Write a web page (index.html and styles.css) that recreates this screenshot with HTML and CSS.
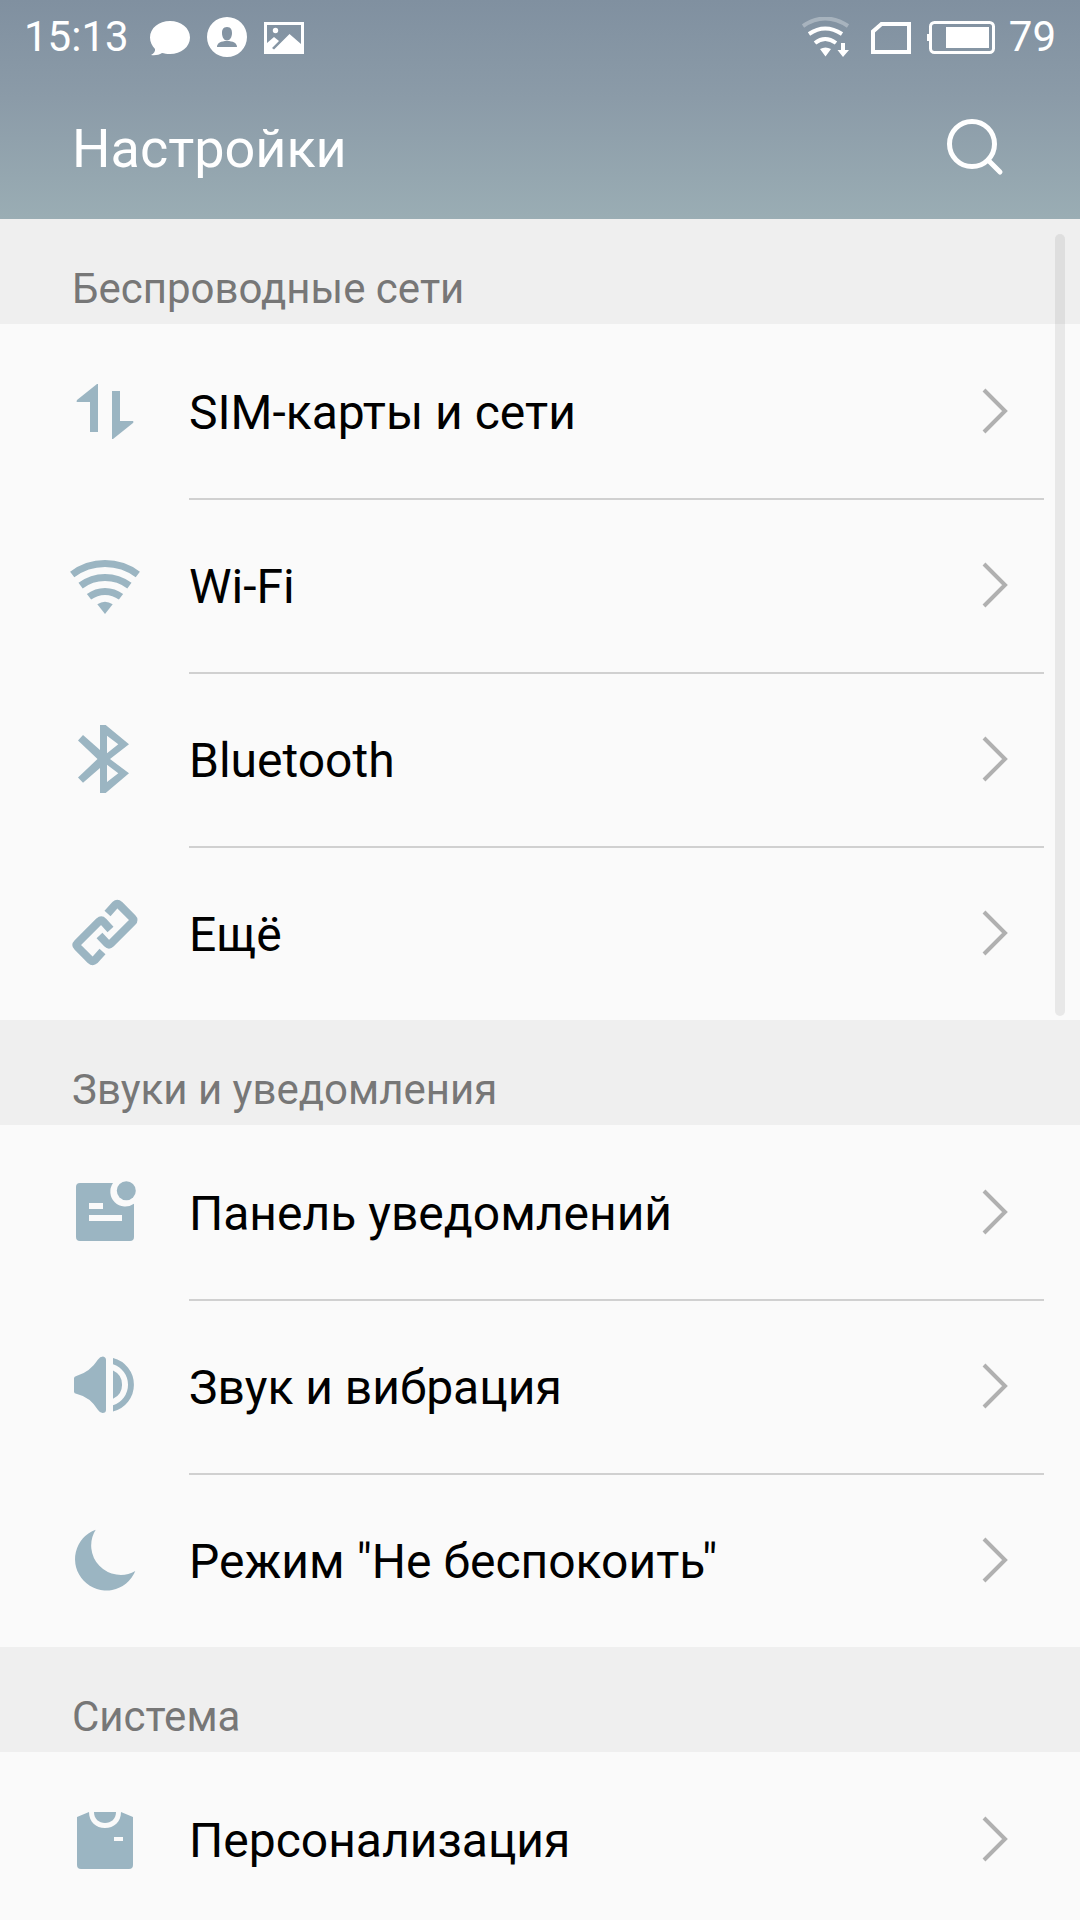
FILE: index.html
```html
<!DOCTYPE html>
<html lang="ru">
	<head>
		<title>Настройки</title>
		<meta charset="UTF-8">
		<meta name="viewport" content="width=device-width">
		<link rel="stylesheet" href="styles.css">
	</head>
	<body>
		<svg width="0" height="0" class="defs">
			<symbol id="arrow" viewBox="0 0 28 48">
				<path d="M3 2 L24 23 L3 44" fill="none" stroke="#b0b0b0" stroke-width="4"/>
			</symbol>
		</svg>

		<header class="top">
			<div class="status">
				<span class="status-text">15:13</span>
				<div class="notices">
					<svg width="40" height="40" viewBox="0 0 40 40">
						<path d="M20 4 C31 4 40 11 40 20.500 C40 30 31 37 20 37 C17 37 14 36.500 12 36 C9 38 5 38.500 1 38 C4 36.500 5.500 34 5 32 C2 29 0 25 0 20.500 C0 11 9 4 20 4z"/>
					</svg>
					<svg width="40" height="40" viewBox="0 0 40 40">
						<path fill-rule="evenodd" d="M20 0 A20 20 0 0 1 20 40 A20 20 0 0 1 20 0z M20 10 C16 10 15 13 15 16 C15 20 17 23.500 20 23.500 C23 23.500 25 20 25 16 C25 13 24 10 20 10z M10 30 H30 C30 26 26 24 20 24 C14 24 10 26 10 30z"/>
					</svg>
					<svg width="40" height="40" viewBox="0 0 40 40">
						<path fill-rule="evenodd" d="M0 5 H40 V37 H0z M3 8 V26 L10 20 L15 24 L8 31 L10 32.500 L25.500 17 L37 27 V8z"/>
						<circle cx="11.500" cy="13.500" r="2.700"/>
					</svg>
				</div>
				<div class="signals">
					<svg width="55" height="40" viewBox="0 0 55 40">
						<path d="M1 9 Q23 -6 46 9" fill="none" stroke="#fff" stroke-width="4" opacity=".3"/>
						<path d="M7 17 Q23 6 40 17 M13 26 Q23 18 34 26" fill="none" stroke="#fff" stroke-width="4"/>
						<path d="M18 32 Q23.500 29 29 32 L23.500 39.500z M39 26 H43 V33 H47 L41 40 L35.500 33 H39z"/>
					</svg>
					<svg width="42" height="40" viewBox="0 0 42 40">
						<path d="M10.500 7 H38 V35 H2 V14.500z" fill="none" stroke="#fff" stroke-width="4"/>
					</svg>
					<svg width="68" height="40" viewBox="0 0 68 40">
						<rect x="3.500" y="5.500" width="63" height="30" rx="4" fill="none" stroke="#fff" stroke-width="3"/>
						<path d="M2 17 H0 V24 H2z M19 10 H62 V31 H19z"/>
					</svg>
					<span class="status-text">79</span>
				</div>
			</div>
			<div class="title-bar">
				<h1>Настройки</h1>
				<button class="search" type="button" aria-label="Поиск">
					<svg width="60" height="60" viewBox="0 0 60 60">
						<circle cx="27" cy="27" r="22.500" fill="none" stroke="#fff" stroke-width="5"/>
						<path d="M43 43 L55 55" stroke="#fff" stroke-width="5" stroke-linecap="round"/>
					</svg>
				</button>
			</div>
		</header>

		<main class="list">
			<section>
				<h2>Беспроводные сети</h2>
				<a class="row" href="#sim">
					<svg class="icon" viewBox="0 0 72 72">
						<path d="M28 9 H29 V57 H21 V27 H8 Q7 27 8 25z M43 16 H51 V46 H64 Q65 47 64 48 L44 64 H43z"/>
					</svg>
					<span class="row-body">SIM-карты и сети <svg class="arrow"><use href="#arrow"/></svg></span>
				</a>
				<a class="row" href="#wifi">
					<svg class="icon" viewBox="0 0 72 72">
						<path class="line" d="M3.200 25.500 A54.500 54.500 0 0 1 68.800 25.500 M11.600 36.600 A40.500 40.500 0 0 1 60.400 36.600 M20 47.800 A26.500 26.500 0 0 1 52 47.800"/>
						<path d="M28.300 55.300 A14 14 0 0 1 43.700 55.300 L36 65z"/>
					</svg>
					<span class="row-body">Wi-Fi <svg class="arrow"><use href="#arrow"/></svg></span>
				</a>
				<a class="row" href="#bluetooth">
					<svg class="icon" viewBox="0 0 72 72">
						<path fill-rule="evenodd" d="M31 2 H36.700 L60 21.300 L41 36 L60 50.300 L36.700 70 H31 V45 L14 59.700 L9 54.500 L28.500 36 L9 17.500 L14 12 L31 27z M38 12.700 V30.300 L49.300 21.300z M38 41.700 V59 L49.300 50.300z"/>
					</svg>
					<span class="row-body">Bluetooth <svg class="arrow"><use href="#arrow"/></svg></span>
				</a>
				<a class="row" href="#more">
					<svg class="icon" viewBox="0 0 72 72">
						<path class="line link" d="M38.500 16.500 L46 8 Q48.300 6 50.500 8 L63.500 21 Q65.500 23 63.500 25 L42 46.500 Q40 48.500 38 46.500 L30.500 38.500 M41.500 32.500 L34.300 24.500 Q32.300 22.500 30 24.500 L8.500 46 Q6.500 48 8.500 50 L21.500 63 Q23.700 65 26 63 L33.500 54.500"/>
					</svg>
					<span class="row-body">Ещё <svg class="arrow"><use href="#arrow"/></svg></span>
				</a>
			</section>

			<section>
				<h2>Звуки и уведомления</h2>
				<a class="row" href="#notifications">
					<svg class="icon" viewBox="0 0 72 72">
						<path fill-rule="evenodd" d="M11 7 H44 A15 15 0 0 0 65 27.800 V61 Q65 65 61 65 H11 Q7 65 7 61 V11 Q7 7 11 7z M20 27 V33 H34 V27z M20 39 V45 H53 V39z"/>
						<circle cx="57.300" cy="14.700" r="9.500"/>
					</svg>
					<span class="row-body">Панель уведомлений <svg class="arrow"><use href="#arrow"/></svg></span>
				</a>
				<a class="row" href="#sound">
					<svg class="icon" viewBox="0 0 72 72">
						<path d="M8 25.700 Q21 22 29 9.500 Q31 6.500 34 6.500 Q37 7 37 10 V60 Q37 63 33.500 63 Q31 63 29 60 Q21 47 8 44 Q5 43.300 5 42 V28 Q5 26.500 8 25.700z"/>
						<path d="M44 8 A27.500 27.500 0 0 1 44 61.400 V55.200 A21.500 21.500 0 0 0 44 14.200z M44 20.600 A15.500 15.500 0 0 1 44 48.800z"/>
					</svg>
					<span class="row-body">Звук и вибрация <svg class="arrow"><use href="#arrow"/></svg></span>
				</a>
				<a class="row" href="#dnd">
					<svg class="icon" viewBox="0 0 72 72">
						<path d="M26.700 5.700 A31.300 31.300 0 1 0 66.300 47 A29.500 29.500 0 0 1 26.700 5.700z"/>
					</svg>
					<span class="row-body">Режим "Не беспокоить" <svg class="arrow"><use href="#arrow"/></svg></span>
				</a>
			</section>

			<section>
				<h2>Система</h2>
				<a class="row" href="#personalization">
					<svg class="icon" viewBox="0 0 72 72">
						<path fill-rule="evenodd" d="M8 14 L20 9 C20 19 27 25 36 25 C45 25 52 19 52 9 L64 14 V62 Q64 66 60 66 H12 Q8 66 8 62z M45 34 V38 H54 V34z"/>
						<path d="M25 9 H47 C47 16 42 20 36 20 C30 20 25 16 25 9z"/>
					</svg>
					<span class="row-body">Персонализация <svg class="arrow"><use href="#arrow"/></svg></span>
				</a>
			</section>

			<div class="scroll"></div>
		</main>
	</body>
</html>
```
FILE: styles.css
```css
* {
	box-sizing: border-box;
	margin: 0px;
	padding: 0px;
}

body {
	display: flex;
	flex-direction: column;
	height: 100vh;
	overflow: hidden;
	background: #fafafa;
	font-family: Roboto, "Noto Sans", sans-serif;
	color: #000;
}

h1, h2 { font-weight: normal; }

svg { flex: none; }

.defs { position: absolute; }

.top {
	flex: none;
	background: linear-gradient(#8090a0, #8b9ba8 45%, #9aadb4);
	color: #fff;
	fill: #fff;
}

.status {
	display: flex;
	align-items: center;
	height: 74px;
	padding: 0px 24px;
}

.status-text {
	font-size: 42px;
	line-height: 48px;
}

.notices {
	display: flex;
	gap: 17px;
	margin-left: 21px;
}

.signals {
	display: flex;
	align-items: center;
	gap: 14px;
	margin-left: auto;
}

.title-bar {
	display: flex;
	align-items: center;
	justify-content: space-between;
	height: 145px;
	padding: 0px 75px 0px 72px;
}

h1 {
	padding-top: 4px;
	font-size: 54px;
	line-height: 64px;
}

.search {
	height: 60px;
	border: none;
	background: none;
}

.list {
	position: relative;
	flex: 1;
	min-height: 0px;
	overflow: hidden;
}

h2 {
	height: 105px;
	padding: 45px 72px 10px;
	background: #efefef;
	color: #777;
	font-size: 42px;
	line-height: 50px;
}

.row {
	display: flex;
	align-items: center;
	height: 174px;
	padding: 0px 36px 0px 69px;
	color: #000;
	text-decoration: none;
}

.icon {
	width: 72px;
	height: 72px;
	margin-right: 48px;
	fill: #9bb5c2;
}

.line {
	fill: none;
	stroke: #9bb5c2;
	stroke-width: 7px;
}

.link { stroke-width: 8px; }

.row-body {
	display: flex;
	flex: 1;
	align-items: center;
	justify-content: space-between;
	height: 174px;
	padding-right: 35px;
	border-top: 2px solid transparent;
	font-size: 48px;
}

.row + .row .row-body { border-color: #d0d0d0; }

.arrow {
	width: 28px;
	height: 48px;
}

.scroll {
	position: absolute;
	top: 15px;
	right: 15px;
	width: 10px;
	height: 46%;
	border-radius: 5px;
	background: rgba(0, 0, 0, 0.07);
}
```
